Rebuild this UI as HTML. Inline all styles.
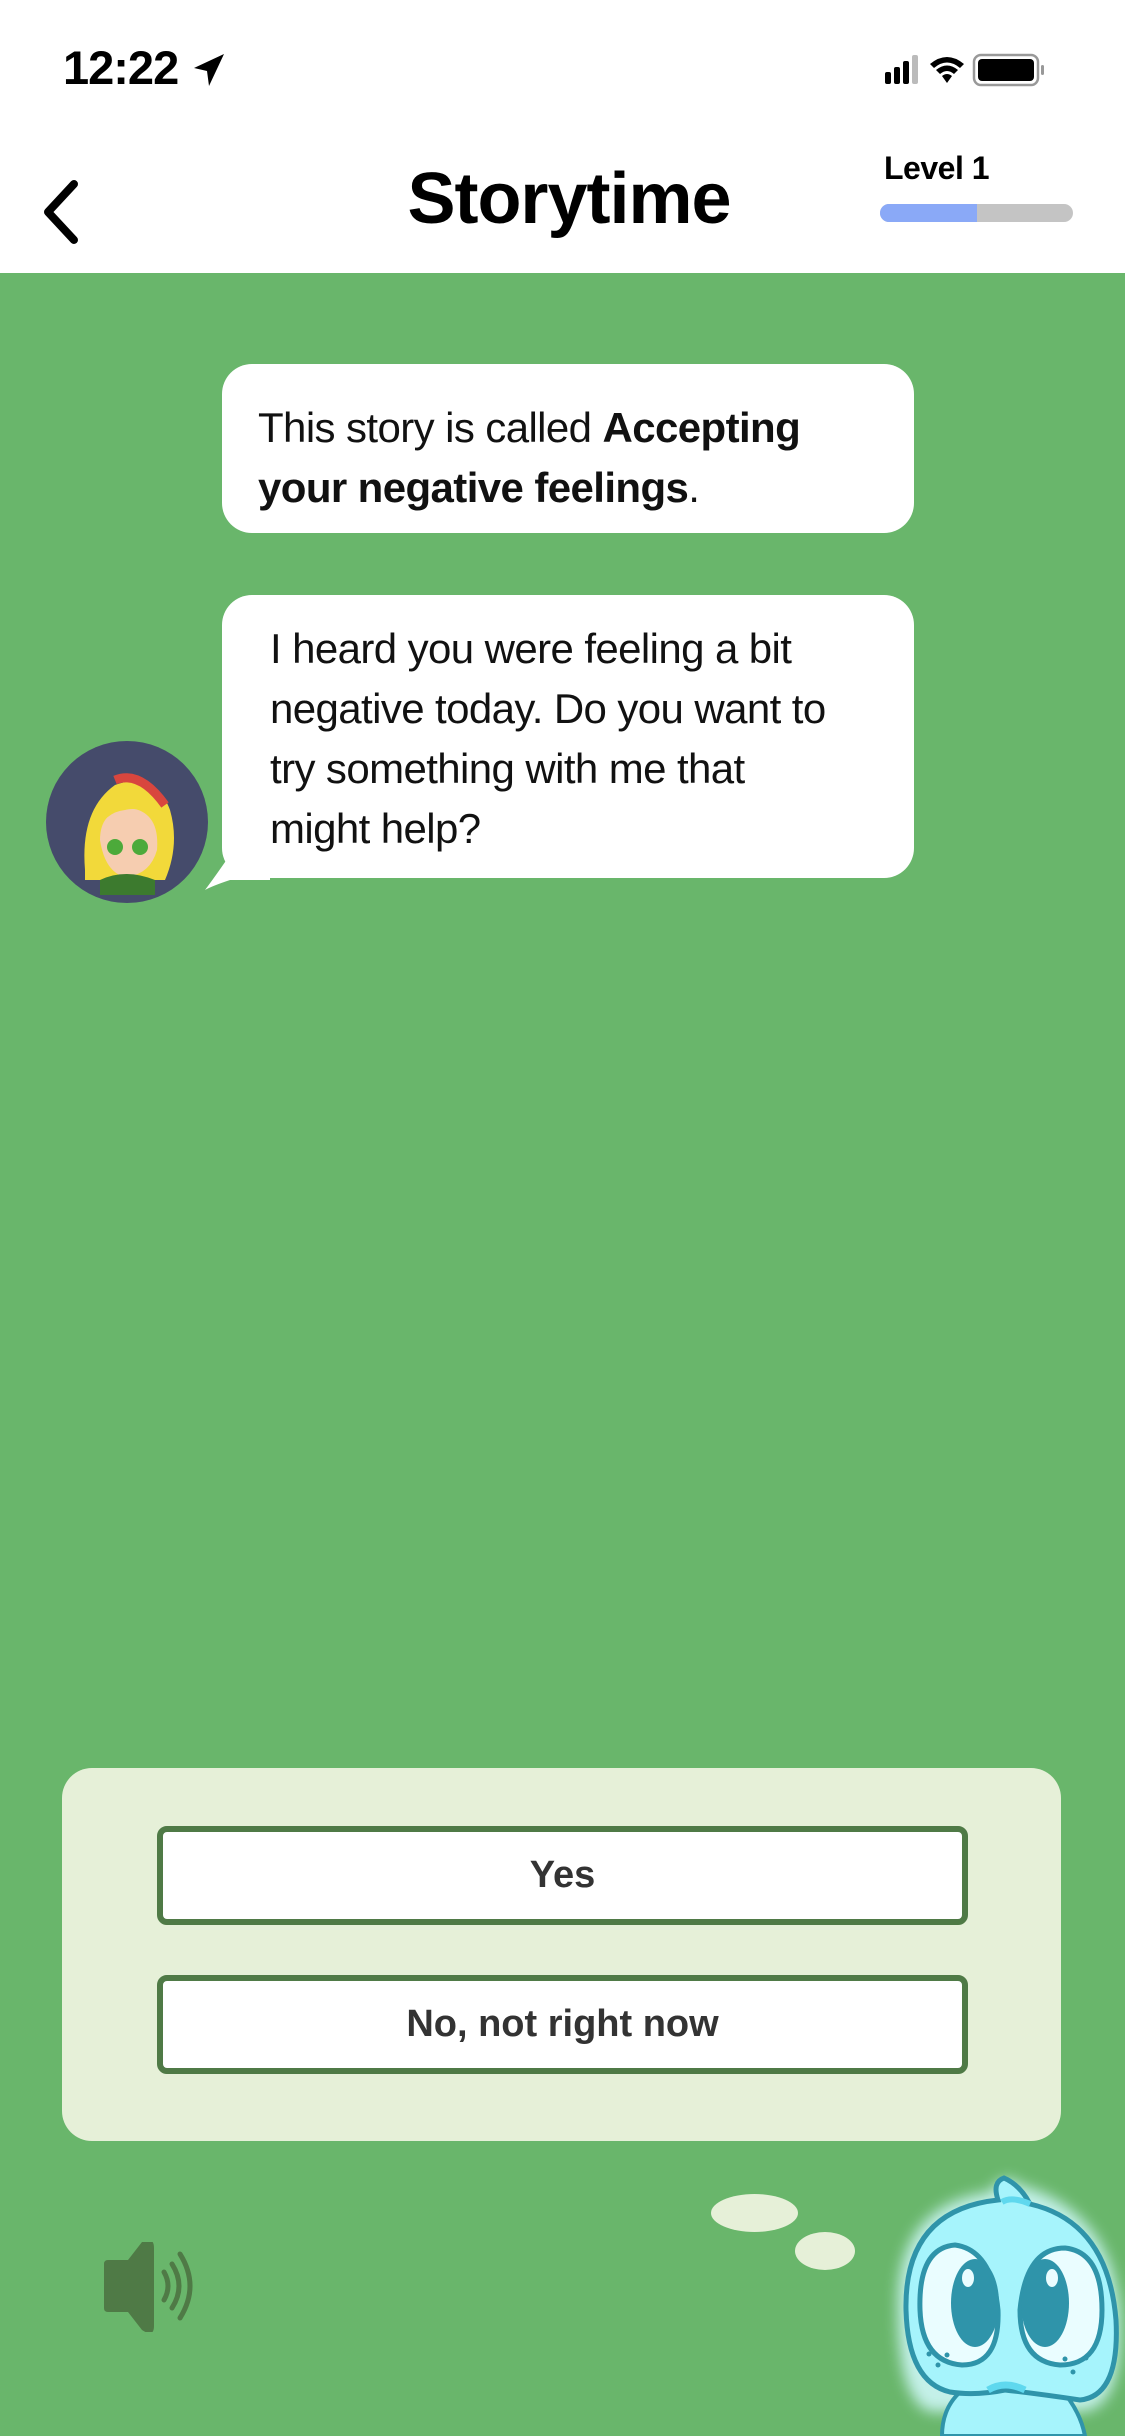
<!DOCTYPE html>
<html><head><meta charset="utf-8"><style>
*{margin:0;padding:0;box-sizing:border-box}
body{width:1125px;height:2436px;overflow:hidden;background:#69b66b;font-family:"Liberation Sans",sans-serif;position:relative}
.hdr{position:absolute;left:0;top:0;width:1125px;height:273px;background:#fff}
.abs{position:absolute}
.bub{position:absolute;background:#fff;border-radius:30px;color:#111;font-size:42px;line-height:60px;letter-spacing:-0.6px}
.btn{position:absolute;left:157px;width:811px;height:99px;background:#fff;border:6px solid #4f7a46;border-radius:10px;text-align:center;font-size:38px;font-weight:bold;color:#333;line-height:87px}
</style></head><body>
<div class="hdr"></div>
<div class="abs" style="left:63px;top:40px;font-size:47px;font-weight:bold;letter-spacing:-1px">12:22</div>
<svg class="abs" style="left:192px;top:52px" width="34" height="36" viewBox="0 0 34 36"><path d="M32 2 L2 16 L15 19 L17 34 Z" fill="#000"/></svg>
<svg class="abs" style="left:880px;top:50px" width="200" height="40" viewBox="0 0 200 40">
<rect x="5" y="22" width="6" height="12" rx="2" fill="#000"/><rect x="14" y="17" width="6" height="17" rx="2" fill="#000"/><rect x="23" y="11" width="6" height="23" rx="2" fill="#000"/><rect x="32" y="5" width="6" height="29" rx="2" fill="#bbb"/>
<path d="M50 14 Q67 0 84 14 L80 18 Q67 7 54 18Z M56 20 Q67 11 78 20 L74 24 Q67 18 60 24Z M62 26 Q67 22 72 26 L67 33Z" fill="#000"/>
<rect x="94" y="5" width="64" height="30" rx="7" fill="none" stroke="#999" stroke-width="2.5"/><rect x="98" y="9" width="56" height="22" rx="4" fill="#000"/><rect x="161" y="15" width="3" height="10" rx="1.5" fill="#999"/>
</svg>
<svg class="abs" style="left:40px;top:178px" width="44" height="68" viewBox="0 0 44 68"><path d="M34 6 L8 34 L34 62" fill="none" stroke="#000" stroke-width="8" stroke-linecap="round" stroke-linejoin="round"/></svg>
<div class="abs" style="left:0;width:1138px;text-align:center;top:158px;font-size:72px;font-weight:bold;letter-spacing:-1px">Storytime</div>
<div class="abs" style="left:884px;top:150px;font-size:32px;font-weight:bold;letter-spacing:-0.5px">Level 1</div>
<div class="abs" style="left:880px;top:204px;width:193px;height:18px;border-radius:9px;background:#c4c4c4;overflow:hidden"><div style="width:97px;height:18px;background:#8aa9f7"></div></div>

<div class="bub" style="left:222px;top:364px;width:692px;height:169px;padding:34px 0 0 36px">This story is called <b>Accepting<br>your negative feelings</b>.</div>
<svg class="abs" style="left:200px;top:840px" width="80" height="55" viewBox="0 0 80 55"><path d="M40 0 L70 0 L70 40 L30 40 Q12 46 5 50 Q20 30 40 0Z" fill="#fff"/></svg>
<div class="bub" style="left:222px;top:595px;width:692px;height:283px;padding:24px 0 0 48px">I heard you were feeling a bit<br>negative today. Do you want to<br>try something with me that<br>might help?</div>

<svg class="abs" style="left:45px;top:740px" width="164" height="164" viewBox="0 0 164 164">
<circle cx="82" cy="82" r="81" fill="#454b6b"/>
<path d="M40 130 Q35 70 70 45 Q110 30 125 70 Q135 105 120 140 L40 140Z" fill="#f2d93a"/>
<path d="M55 100 Q55 70 85 68 Q115 72 112 110 Q105 135 80 137 Q60 132 55 100Z" fill="#f6cdb0"/>
<path d="M45 90 Q50 55 85 50 Q115 55 118 85 Q100 65 80 70 Q60 72 50 95Z" fill="#f2d93a"/>
<circle cx="70" cy="107" r="8" fill="#4caa3a"/><circle cx="95" cy="107" r="8" fill="#4caa3a"/>
<path d="M70 40 Q95 30 120 65" stroke="#d8463e" stroke-width="9" fill="none"/>
<path d="M55 140 Q80 128 110 140 L110 155 L55 155Z" fill="#3c7a2e"/>
</svg>

<div class="abs" style="left:62px;top:1768px;width:999px;height:373px;background:#e6f0d8;border-radius:30px"></div>
<div class="btn" style="top:1826px">Yes</div>
<div class="btn" style="top:1975px">No, not right now</div>

<svg class="abs" style="left:100px;top:2242px" width="112" height="90" viewBox="0 0 112 90">
<path d="M4 22 Q4 18 8 18 L28 18 L42 -0 Q54 -6 54 6 L54 84 Q54 96 42 88 L28 70 L8 70 Q4 70 4 66Z" fill="#4f7a46"/>
<path d="M64 30 Q72 44 64 58" stroke="#4f7a46" stroke-width="5" fill="none" stroke-linecap="round"/>
<path d="M72 22 Q86 44 72 66" stroke="#4f7a46" stroke-width="5" fill="none" stroke-linecap="round"/>
<path d="M80 12 Q100 44 80 76" stroke="#4f7a46" stroke-width="5" fill="none" stroke-linecap="round"/>
</svg>
<div class="abs" style="left:711px;top:2194px;width:87px;height:38px;border-radius:50%;background:#e6f0d8"></div>
<div class="abs" style="left:795px;top:2232px;width:60px;height:38px;border-radius:50%;background:#e6f0d8"></div>

<svg class="abs" style="left:880px;top:2160px" width="245" height="276" viewBox="0 0 245 276">
<defs><filter id="g"><feGaussianBlur stdDeviation="7"/></filter></defs>
<path d="M18 150 Q15 45 110 32 Q125 10 140 25 Q230 50 240 150 Q245 250 200 252 L50 252 Q18 240 18 150Z" fill="#d4fbff" filter="url(#g)" opacity="0.85"/>
<path d="M62 276 Q62 245 85 228 L180 228 Q200 250 205 276Z" fill="#a6f4fc" stroke="#2f94aa" stroke-width="4"/>
<path d="M26 150 Q24 50 118 40 Q112 22 124 18 Q140 25 150 44 Q228 62 236 160 Q240 236 200 240 Q160 234 125 230 Q95 236 70 232 Q28 222 26 150Z" fill="#a6f4fc" stroke="#2f94aa" stroke-width="5"/>
<path d="M40 150 Q38 88 75 85 Q112 90 118 150 Q120 205 82 205 Q42 202 40 150Z" fill="#eafdff" stroke="#2f94aa" stroke-width="5"/>
<path d="M140 150 Q146 88 185 88 Q222 92 222 150 Q222 205 180 205 Q140 202 140 150Z" fill="#eafdff" stroke="#2f94aa" stroke-width="5"/>
<ellipse cx="95" cy="143" rx="24" ry="44" fill="#2f94aa"/>
<ellipse cx="165" cy="143" rx="24" ry="44" fill="#2f94aa"/>
<ellipse cx="88" cy="118" rx="6" ry="9" fill="#eafdff"/><ellipse cx="172" cy="118" rx="6" ry="9" fill="#eafdff"/>
<circle cx="49" cy="194" r="2.5" fill="#2f94aa"/><circle cx="67" cy="195" r="2.5" fill="#2f94aa"/><circle cx="58" cy="205" r="2.5" fill="#2f94aa"/>
<circle cx="206" cy="198" r="2.5" fill="#2f94aa"/><circle cx="185" cy="199" r="2.5" fill="#2f94aa"/><circle cx="193" cy="212" r="2.5" fill="#2f94aa"/>
<path d="M108 230 Q125 220 145 230" stroke="#5fd8ee" stroke-width="7" fill="none"/>
<path d="M122 42 Q132 36 150 44" stroke="#5fd8ee" stroke-width="6" fill="none"/>
</svg>
</body></html>
